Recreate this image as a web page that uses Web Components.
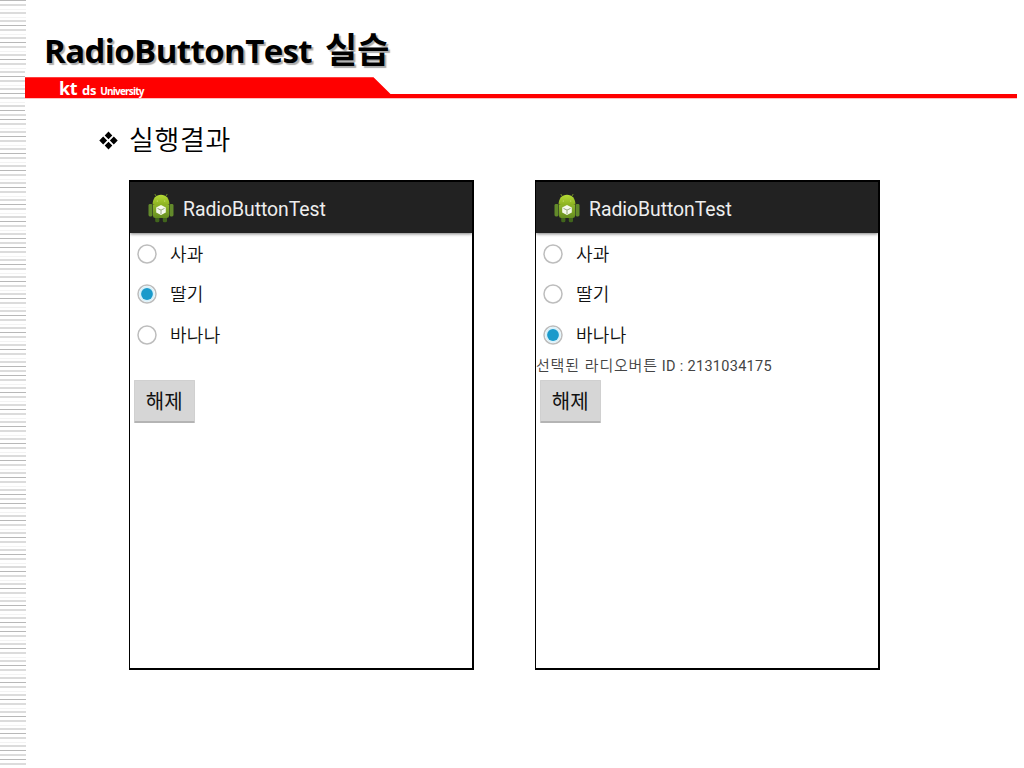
<!DOCTYPE html>
<html lang="ko">
<head>
<meta charset="utf-8">
<title>RadioButtonTest 실습</title>
<style>
  html, body {
    margin: 0;
    background: #FFFFFF;
  }
</style>
</head>
<body>
<lecture-slide>
  <slide-title slot="title"><span slot="latin">RadioButtonTest</span><span slot="korean">실습</span></slide-title>
  <brand-bar slot="brand"></brand-bar>
  <slide-bullet slot="bullet">실행결과</slide-bullet>
  <phone-screen label="RadioButtonTest">
    <radio-option>사과</radio-option>
    <radio-option checked>딸기</radio-option>
    <radio-option>바나나</radio-option>
    <result-text></result-text>
    <clear-button>해제</clear-button>
  </phone-screen>
  <phone-screen label="RadioButtonTest">
    <radio-option>사과</radio-option>
    <radio-option>딸기</radio-option>
    <radio-option checked>바나나</radio-option>
    <result-text><span>선택된 라디오버튼</span><span slot="value">ID : 2131034175</span></result-text>
    <clear-button>해제</clear-button>
  </phone-screen>
</lecture-slide>

<script>
class BaseElement extends HTMLElement {
  constructor() {
    super();
    this.attachShadow({ mode: 'open' });
  }

  connectedCallback() {
    const template = document.createElement('template');
    template.innerHTML = `<style>${this.componentCss()}</style>${this.componentHtml()}`;
    this.shadowRoot.replaceChildren(template.content.cloneNode(true));
  }
}

class LectureSlide extends BaseElement {
  componentCss() {
    return `
    :host {
      display: grid;
      grid-template-columns: 25px 1fr;
      width: 1024px;
      height: 768px;
      overflow: hidden;
      background: #FFFFFF;
      color: #000000;
      font-family: "Noto Sans CJK KR", sans-serif;
    }
    .content {
      display: flex;
      flex-direction: column;
      min-width: 0;
    }
    .title { height: 77px; }
    .brand { height: 22px; }
    .bullet { height: 81px; }
    .screens {
      display: flex;
      gap: 61px;
      padding-left: 104px;
    }`;
  }

  componentHtml() {
    return `
      <ruled-margin></ruled-margin>
      <div class="content">
        <div class="title"><slot name="title"></slot></div>
        <div class="brand"><slot name="brand"></slot></div>
        <div class="bullet"><slot name="bullet"></slot></div>
        <div class="screens"><slot></slot></div>
      </div>`;
  }
}

// Ruled strip down the left edge, the ruling repeats every 128px
class RuledMargin extends BaseElement {
  componentCss() {
    return `
    :host { display: block; width: 25px; height: 768px; }
    svg { display: block; overflow: visible; }`;
  }

  line(y, kind) {
    const [height, fill] = {
      light: [2, '#DCDCDC'],
      dark: [1, '#B8B8B8'],
      faint: [1, '#F3F3F3'],
    }[kind];
    const width = y >= 70 && y < 112 ? 25 : 26;
    return `<rect y="${y}" width="${width}" height="${height}" fill="${fill}"/>`;
  }

  group(y) {
    return this.line(y, 'light') + this.line(y + 5, 'dark')
      + this.line(y + 9, 'light') + this.line(y + 14, 'faint');
  }

  componentHtml() {
    let lines = this.line(0, 'dark') + this.line(4, 'light') + this.line(9, 'faint')
      + this.line(12, 'light') + this.line(17, 'faint');
    for (let y = 20; y < 105; y += 17) lines += this.group(y);
    for (let start = 105; start < 768; start += 128) {
      lines += this.line(start, 'light') + this.line(start + 5, 'dark')
        + this.line(start + 9, 'light') + this.line(start + 14, 'dark')
        + this.line(start + 18, 'light') + this.line(start + 23, 'faint');
      for (let i = 0; i < 6; i++) lines += this.group(start + 26 + i * 17);
    }
    return `<svg width="25" height="768" shape-rendering="crispEdges">${lines}</svg>`;
  }
}

class SlideTitle extends BaseElement {
  componentCss() {
    return `
    :host {
      display: flex;
      align-items: baseline;
      gap: 13px;
      padding: 25px 0 0 19px;
      font-weight: 700;
      line-height: 46px;
      white-space: nowrap;
      text-shadow: 2px 2px 1px rgba(0, 0, 0, 0.33);
    }
    .latin {
      font-family: "Open Sans", sans-serif;
      font-size: 33px;
      letter-spacing: -0.6px;
    }
    .korean { font-size: 35px; }`;
  }

  componentHtml() {
    return '<span class="latin"><slot name="latin"></slot></span><span class="korean"><slot name="korean"></slot></span>';
  }
}

class BrandBar extends BaseElement {
  componentCss() {
    return `
    :host {
      display: grid;
      width: 992px;
      height: 22px;
    }
    svg, .logo { grid-area: 1 / 1; }
    svg { display: block; }
    .logo {
      display: flex;
      align-items: baseline;
      padding-left: 34px;
      color: #FFFFFF;
      font-family: "Open Sans", sans-serif;
      font-weight: 700;
      line-height: 22px;
      white-space: nowrap;
    }
    .kt { font-size: 18px; letter-spacing: -0.5px; }
    .ds { margin-left: 5px; font-size: 13px; font-weight: 700; letter-spacing: -0.2px; }
    .university { margin-left: 4px; font-size: 10px; letter-spacing: -0.8px; }`;
  }

  componentHtml() {
    return `
      <svg width="992" height="22">
        <path d="M0 0.3H348.5L365.5 17H992V21.3H0Z" fill="#FF0000"/>
      </svg>
      <div class="logo"><span class="kt">kt</span><span class="ds">ds</span><span class="university">University</span></div>`;
  }
}

class SlideBullet extends BaseElement {
  componentCss() {
    return `
    :host {
      display: flex;
      align-items: center;
      gap: 11px;
      padding: 20px 0 0 74px;
      font-size: 27px;
      line-height: 40px;
      font-weight: 350;
      letter-spacing: 0.7px;
      white-space: nowrap;
    }
    svg { margin-top: 3px; }`;
  }

  componentHtml() {
    return `
      <svg width="19" height="19" viewBox="0 0 19 19">
        <path d="M9.5 0.5L13.3 4.4L9.5 8.3L5.7 4.4ZM9.5 10.7L13.3 14.6L9.5 18.5L5.7 14.6ZM4.2 5.6L8.1 9.5L4.2 13.4L0.3 9.5ZM14.8 5.6L18.7 9.5L14.8 13.4L10.9 9.5Z"/>
      </svg>
      <span class="text"><slot></slot></span>`;
  }
}

class AndroidIcon extends BaseElement {
  componentCss() {
    return `
    :host { display: block; width: 26px; height: 30px; }
    svg { display: block; }`;
  }

  componentHtml() {
    return `
      <svg width="26" height="30" viewBox="0 0 26 30">
        <defs>
          <linearGradient id="head" x2="0" y2="1">
            <stop stop-color="#B5DB35"/><stop offset="1" stop-color="#89AE20"/>
          </linearGradient>
          <linearGradient id="body" x2="0" y2="1">
            <stop stop-color="#91B72B"/><stop offset="1" stop-color="#648C20"/>
          </linearGradient>
        </defs>
        <path d="M8 3L6.8 1M18 3L19.2 1" stroke="#789B25" stroke-width="0.9"/>
        <rect x="0.5" y="11" width="4" height="12.5" rx="1.4" fill="#638A2B"/>
        <rect x="21.5" y="11" width="4" height="12.5" rx="1.4" fill="#638A2B"/>
        <rect x="7.2" y="22" width="4.2" height="7.3" rx="1.6" fill="#41651C"/>
        <rect x="14.8" y="22" width="4.2" height="7.3" rx="1.6" fill="#41651C"/>
        <path d="M5 12H21V22.5Q21 25 18.5 25H7.5Q5 25 5 22.5Z" fill="url(#body)"/>
        <path d="M4.6 11.5C4.6 5.5 8 1.8 13 1.8S21.4 5.5 21.4 11.5Q13 14 4.6 11.5Z" fill="url(#head)"/>
        <circle cx="9.3" cy="8" r="0.6" fill="#D2E58A"/>
        <circle cx="16.7" cy="8" r="0.6" fill="#D2E58A"/>
        <path d="M13 12L17.8 14.4V19.5L13 22L8.2 19.5V14.4Z" fill="#F5F8EC"/>
        <path d="M9.5 15.4L13 17.1L16.5 15.4M13 17.1V21" fill="none" stroke="#98A77D" stroke-width="1"/>
      </svg>`;
  }
}

class PhoneScreen extends BaseElement {
  get label() { return this.getAttribute('label'); }

  componentCss() {
    return `
    :host {
      display: flex;
      flex-direction: column;
      box-sizing: border-box;
      width: 345px;
      height: 490px;
      border: 2px solid #000000;
      border-left-width: 1px;
      background: #FFFFFF;
    }
    .bar {
      display: flex;
      align-items: center;
      gap: 9px;
      flex: none;
      height: 51px;
      padding-left: 18px;
      background: #222222;
      box-shadow: 0 1px 3px rgba(0, 0, 0, 0.5);
      clip-path: inset(0 0 -5px 0);
      color: #EEEEEE;
      font-family: Roboto, sans-serif;
      font-size: 19.4px;
      white-space: nowrap;
    }
    .label { padding-top: 3px; letter-spacing: -0.05px; }
    .body { display: flex; flex-direction: column; align-items: flex-start; }`;
  }

  componentHtml() {
    return `
      <div class="bar"><android-icon></android-icon><span class="label">${this.label}</span></div>
      <div class="body"><slot></slot></div>`;
  }
}

class RadioOption extends BaseElement {
  componentCss() {
    return `
    :host {
      display: flex;
      align-items: center;
      gap: 13px;
      height: 40.6px;
      padding-left: 7px;
      color: #111111;
      font-size: 18px;
      font-weight: 350;
      line-height: 24px;
      letter-spacing: 0.3px;
      white-space: nowrap;
    }
    svg { display: block; margin-top: 1px; }
    .text { margin-top: -1px; }`;
  }

  componentHtml() {
    const dot = this.hasAttribute('checked')
      ? '<circle cx="10" cy="10" r="7.9" fill="#D9F1FA"/><circle cx="10" cy="10" r="5.9" fill="#1A9ACB"/>'
      : '';
    return `
      <svg width="20" height="20" viewBox="0 0 20 20">
        <circle cx="10" cy="10" r="9" fill="#FFFFFF" stroke="#BDBDBD" stroke-width="1.5"/>${dot}
      </svg>
      <span class="text"><slot></slot></span>`;
  }
}

class ResultText extends BaseElement {
  componentCss() {
    return `
    :host {
      display: flex;
      align-items: baseline;
      gap: 4px;
      height: 22px;
      color: #444444;
      font-size: 15px;
      font-weight: 350;
      line-height: 20px;
      white-space: nowrap;
    }
    .text { letter-spacing: 0.8px; }
    .value {
      font-family: Roboto, sans-serif;
      font-size: 14.5px;
      font-weight: 400;
      letter-spacing: 0.3px;
    }`;
  }

  componentHtml() {
    return '<span class="text"><slot></slot></span><span class="value"><slot name="value"></slot></span>';
  }
}

class ClearButton extends BaseElement {
  componentCss() {
    return `
    :host { display: block; margin: 3px 0 0 4px; }
    .button {
      display: block;
      box-sizing: border-box;
      width: 60.5px;
      height: 43px;
      padding: 0;
      border: 1px solid #D0D0D0;
      border-bottom: 2px solid #B4B4B4;
      border-radius: 1px;
      background: #D6D6D6;
      color: #111111;
      font: 400 20px/38px "Noto Sans CJK KR", sans-serif;
    }`;
  }

  componentHtml() {
    return '<button class="button" type="button"><slot></slot></button>';
  }
}

customElements.define('ruled-margin', RuledMargin);
customElements.define('android-icon', AndroidIcon);
customElements.define('slide-title', SlideTitle);
customElements.define('brand-bar', BrandBar);
customElements.define('slide-bullet', SlideBullet);
customElements.define('radio-option', RadioOption);
customElements.define('result-text', ResultText);
customElements.define('clear-button', ClearButton);
customElements.define('phone-screen', PhoneScreen);
customElements.define('lecture-slide', LectureSlide);
</script>
</body>
</html>
